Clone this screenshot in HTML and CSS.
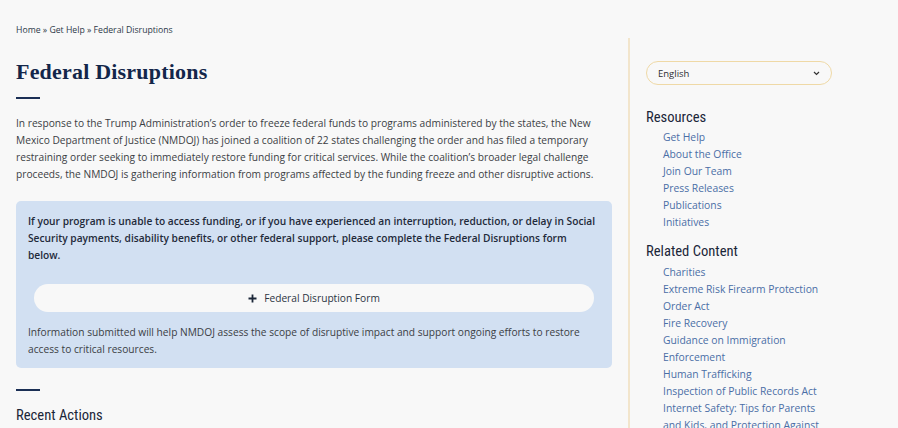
FILE: index.html
```html
<!DOCTYPE html>
<html lang="en">
<head>
<meta charset="utf-8">
<title>Federal Disruptions</title>
<link rel="stylesheet" href="styles.css">
</head>
<body>
<div class="layout">
  <main class="main">
    <nav class="crumbs"><a href="#">Home</a> » <a href="#">Get Help</a> » <span>Federal Disruptions</span></nav>
    <h1 class="title">Federal Disruptions</h1>
    <div class="bar"></div>
    <p class="intro">In response to the Trump Administration’s order to freeze federal funds to programs administered by the states, the New Mexico Department of Justice (NMDOJ) has joined a coalition of 22 states challenging the order and has filed a temporary restraining order seeking to immediately restore funding for critical services. While the coalition’s broader legal challenge proceeds, the NMDOJ is gathering information from programs affected by the funding freeze and other disruptive actions.</p>
    <section class="callout">
      <p class="callout-lead">If your program is unable to access funding, or if you have experienced an interruption, reduction, or delay in Social Security payments, disability benefits, or other federal support, please complete the Federal Disruptions form below.</p>
      <a class="form-btn" href="#"><svg class="plus" width="9" height="9" viewBox="0 0 9 9"><path d="M4.5 0.5v8M0.5 4.5h8" stroke="#1b2638" stroke-width="1.8" fill="none"/></svg><span>Federal Disruption Form</span></a>
      <p class="callout-note">Information submitted will help NMDOJ assess the scope of disruptive impact and support ongoing efforts to restore access to critical resources.</p>
    </section>
    <div class="bar bar2"></div>
    <h2 class="section-title">Recent Actions</h2>
  </main>
  <aside class="side">
    <div class="lang"><span>English</span><svg width="7" height="5" viewBox="0 0 7 5"><path d="M1 1l2.5 2.5L6 1" stroke="#333" stroke-width="1.2" fill="none"/></svg></div>
    <h3 class="side-title">Resources</h3>
    <ul class="links">
      <li><a href="#">Get Help</a></li>
      <li><a href="#">About the Office</a></li>
      <li><a href="#">Join Our Team</a></li>
      <li><a href="#">Press Releases</a></li>
      <li><a href="#">Publications</a></li>
      <li><a href="#">Initiatives</a></li>
    </ul>
    <h3 class="side-title side-title2">Related Content</h3>
    <ul class="links links2">
      <li><a href="#">Charities</a></li>
      <li><a href="#">Extreme Risk Firearm Protection Order Act</a></li>
      <li><a href="#">Fire Recovery</a></li>
      <li><a href="#">Guidance on Immigration Enforcement</a></li>
      <li><a href="#">Human Trafficking</a></li>
      <li><a href="#">Inspection of Public Records Act</a></li>
      <li><a href="#">Internet Safety: Tips for Parents and Kids, and Protection Against Online Predators</a></li>
    </ul>
  </aside>
</div>
</body>
</html>
```
FILE: styles.css
```css
html, body {
  margin: 0;
  padding: 0;
}
body {
  background: #f8f8f8;
  font-family: "Open Sans", "Noto Sans", sans-serif;
  color: #3a3d42;
  height: 428px;
  overflow: hidden;
}
.layout {
  display: flex;
  align-items: flex-start;
  padding-left: 16px;
}
.main {
  width: 596px;
  margin-right: 16px;
  padding-top: 24px;
}
.crumbs {
  font-size: 8.7px;
  line-height: 12px;
  color: #2c3848;
}
.crumbs a {
  color: #2c3848;
  text-decoration: none;
}
.title {
  margin: 23px 0 0;
  font-family: "Liberation Serif", "DejaVu Serif", serif;
  font-weight: bold;
  font-size: 22px;
  line-height: 26px;
  color: #13264a;
  letter-spacing: 0.2px;
}
.bar {
  width: 24px;
  height: 2px;
  background: #1b2f55;
  margin-top: 12px;
}
.intro {
  margin: 16px 0 0;
  font-size: 10.2px;
  line-height: 17px;
  color: #3b3e44;
}
.callout {
  margin-top: 18px;
  background: #d2e0f2;
  border-radius: 5px;
  padding: 12px 12px 10px;
}
.callout p {
  margin: 0;
  font-size: 10.2px;
  line-height: 17px;
}
.callout-lead {
  font-weight: 600;
  color: #1f2a3a;
}
.form-btn {
  display: flex;
  align-items: center;
  justify-content: center;
  gap: 7px;
  height: 28px;
  margin: 20px 6px 12px;
  background: #f8f8f8;
  border-radius: 14px;
  font-size: 10.2px;
  color: #2b3442;
  text-decoration: none;
}
.plus {
  display: block;
}
.callout-note {
  color: #3b3e44;
}
.bar2 {
  margin-top: 21px;
}
.section-title {
  margin: 14px 0 0;
  font-family: "Roboto Condensed", "Liberation Sans Narrow", Roboto, sans-serif;
  font-weight: 400;
  font-size: 14.6px;
  line-height: 20px;
  color: #1b2638;
}
.side {
  margin-top: 38px;
  border-left: 2px solid #f2e5cc;
  padding: 23px 16px 0 16px;
  width: 236px;
  min-height: 400px;
}
.lang {
  width: 186px;
  box-sizing: border-box;
  height: 24px;
  border: 1px solid #efd9a6;
  border-radius: 12px;
  display: flex;
  align-items: center;
  justify-content: space-between;
  padding: 0 11px 0 11px;
  font-size: 9.5px;
  color: #2d2f33;
}
.side-title {
  margin: 22px 0 0;
  font-family: "Roboto Condensed", "Liberation Sans Narrow", Roboto, sans-serif;
  font-weight: 400;
  font-size: 14.6px;
  line-height: 20px;
  color: #1b2638;
}
.side-title2 {
  margin-top: 10px;
}
.links {
  list-style: none;
  margin: 2px 0 0;
  padding: 0 0 0 17px;
  width: 166px;
}
.links2 {
  margin-top: 3px;
}
.links li {
  font-size: 10.35px;
  line-height: 17px;
}
.links a {
  color: #4a6ea6;
  text-decoration: none;
}
```
